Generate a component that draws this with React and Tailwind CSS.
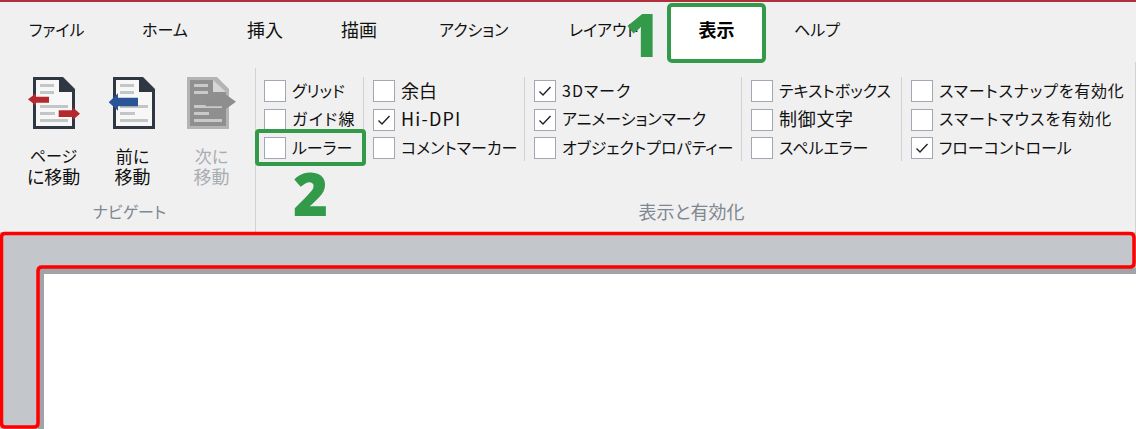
import React from 'react';

const jp = 'font-["Noto_Sans_CJK_JP","Liberation_Sans",sans-serif] [font-feature-settings:"palt"]';
const digit = 'font-["Open_Sans",sans-serif] text-[60px] font-extrabold leading-[68px] text-[#339a4a]';

const tabs = [
  { label: 'ファイル', w: 'w-[142px] pl-[29px]' },
  { label: 'ホーム', w: 'w-[105px]' },
  { label: '挿入', w: 'w-[94px] text-[18px]' },
  { label: '描画', w: 'w-[98px] text-[18px]' },
  { label: 'アクション', w: 'w-[130px]' },
  { label: 'レイアウト', w: 'w-[98px]' },
];

const columns = [
  { w: 'w-[108px] pl-[8px]', items: [['グリッド'], ['ガイド線', false, 'tracking-[1.5px]'], ['ルーラー']] },
  { w: 'w-[161px] pl-[9px]', items: [['余白', false, 'text-[18px]'], ['Hi-DPI', true, 'text-[18px] tracking-[1.2px]'], ['コメントマーカー']] },
  { w: 'w-[217px] pl-[9px]', items: [['3Dマーク', true, 'tracking-[1px]'], ['アニメーションマーク', true], ['オブジェクトプロパティー']] },
  { w: 'w-[160px] pl-[9px]', items: [['テキストボックス'], ['制御文字', false, 'text-[18px] tracking-[0.7px]'], ['スペルエラー']] },
  { w: 'w-[225px] pl-[9px]', items: [['スマートスナップを有効化', false, 'tracking-[0.8px]'], ['スマートマウスを有効化', false, 'tracking-[1px]'], ['フローコントロール', true]] },
];

const DocIcon = ({ frame, page, bar, className, children }) => (
  <svg width="52" height="56" viewBox="0 0 52 56" className={`block overflow-visible ${className || ''}`}>
    <path d="M5 1H35L47 13V53H5Z" fill={frame} />
    <path d="M8 4H31V16H44V50H8Z" fill={page} />
    <g fill={bar}>
      <rect x="12" y="8" width="14" height="3" />
      <rect x="12" y="15" width="14" height="3" />
      <rect x="12" y="29" width="28" height="3" />
      <rect x="12" y="36" width="15" height="3" />
      <rect x="12" y="43" width="28" height="3" />
    </g>
    {children}
  </svg>
);

const NavButton = ({ icon, lines, muted }) => (
  <div className={`flex w-[79px] flex-col items-center leading-[21px] ${muted ? 'text-[#a9adb2]' : 'text-[#111]'}`}>
    {icon}
    <div className="mt-[13px] text-center">
      {lines.map(([text, size]) => (
        <div key={text} className={size}>
          {text}
        </div>
      ))}
    </div>
  </div>
);

const Check = ({ label, checked, extra }) => (
  <div className="flex h-[28.5px] items-center gap-[6px] text-[16px] text-[#111]">
    <span className="flex h-[22px] w-[22px] shrink-0 items-center justify-center border border-[#a3a7b3] bg-white">
      {checked && (
        <svg width="14" height="12" viewBox="0 0 14 12" fill="none" stroke="#222" strokeWidth="1.4">
          <path d="M1.5 6.5L5 10L12.5 2" />
        </svg>
      )}
    </span>
    <span className={`whitespace-nowrap pb-[3px] leading-[24px] ${extra || ''}`}>{label}</span>
  </div>
);

export default function App() {
  return (
    <div className={`relative flex h-[429px] w-[1136px] flex-col overflow-hidden bg-[#c3c6cb] ${jp}`}>
      <div className="h-[2px] bg-[#b0313c]" />
      <div className="flex h-[60px] items-center bg-[#f0f0f0] pb-[6px] text-[16px] text-[#111]">
        {tabs.map((t) => (
          <div key={t.label} className={`${t.w} shrink-0`}>
            {t.label}
          </div>
        ))}
        <div className="relative mt-[8px] flex h-[60px] w-[99px] items-center justify-center rounded-[5px] border-4 border-[#339a4a] bg-white pb-[8px] text-[18px] font-bold text-black">
          表示
        </div>
        <div className="ml-[28px]">ヘルプ</div>
      </div>

      <div className="flex h-[170px] border-r border-[#d2d2d2] bg-[#f0f0f0]">
        <div className="flex w-[255px] shrink-0 flex-col">
          <div className="flex pl-[14px] pt-[14px]">
            <NavButton
              lines={[['ページ', 'text-[16px]'], ['に移動', 'text-[18px]']]}
              icon={
                <DocIcon frame="#2f3742" page="#f7f7f7" bar="#c2c6c7">
                  <path d="M0 23.3L8 17.3V20.7H21V26.7H8V29.7Z" fill="#b5282e" />
                  <path d="M52 37.7L44.7 31.3V34.3H30.7V41H44.7V44Z" fill="#b5282e" />
                </DocIcon>
              }
            />
            <NavButton
              lines={[['前に', 'text-[17px]'], ['移動', 'text-[18px]']]}
              icon={
                <DocIcon frame="#2f3742" page="#f7f7f7" bar="#c2c6c7" className="ml-[3px]">
                  <path d="M0.7 26.3L10 17.3V21.7H30V30.3H10V34.7Z" fill="#2b5496" />
                </DocIcon>
              }
            />
            <NavButton
              muted
              lines={[['次に', 'text-[17px]'], ['移動', 'text-[18px]']]}
              icon={
                <DocIcon frame="#b4b4b4" page="#8f8f8f" bar="#c9c9c9" className="mr-[8px]">
                  <path d="M31 4L44 16H31Z" fill="#d6d6d6" />
                  <path d="M54 25.7L40 15.7V21.7H23.7V30.3H40V35.7Z" fill="#8e8e8e" />
                </DocIcon>
              }
            />
          </div>
          <div className="mt-auto pb-[9px] pl-[4px] text-center text-[16px] leading-[24px] text-[#7f8790]">ナビゲート</div>
        </div>

        <div className="mt-[6px] flex flex-1 flex-col border-l border-[#d2d2d2]">
          <div className="flex pt-[9px]">
            {columns.map((c, i) => (
              <div key={i} className={`${c.w} ${i < 4 ? 'border-r border-[#d2d2d2]' : ''} h-[84px] shrink-0`}>
                {c.items.map(([label, checked, extra]) => (
                  <Check key={label} label={label} checked={checked} extra={extra} />
                ))}
              </div>
            ))}
          </div>
          <div className="mt-auto pb-[9px] pr-[8px] text-center text-[18px] leading-[24px] text-[#7f8790]">表示と有効化</div>
        </div>
      </div>

      <div className="flex-1 pl-[38px] pt-[36px]">
        <div className="h-full border-l-[6px] border-t-[6px] border-[#a0a3a8] bg-white" />
      </div>

      {/* annotations */}
      <div className="absolute left-[255px] top-[129px] h-[37px] w-[111px] rounded-[4px] border-4 border-[#339a4a]" />
      <div className={`absolute left-[625px] top-0 ${digit}`}>1</div>
      <div className={`absolute left-[293px] top-[159px] ${digit}`}>2</div>
      <svg className="absolute left-0 top-0" width="1136" height="429" fill="none">
        <path
          d="M5 233.5H1130Q1134 233.5 1134 237.5V263Q1134 267 1130 267H42Q38 267 38 271V423Q38 427 34 427H5Q1.5 427 1.5 423V237Q1.5 233.5 5 233.5Z"
          stroke="#ff0000"
          strokeWidth="3.5"
        />
      </svg>
    </div>
  );
}
